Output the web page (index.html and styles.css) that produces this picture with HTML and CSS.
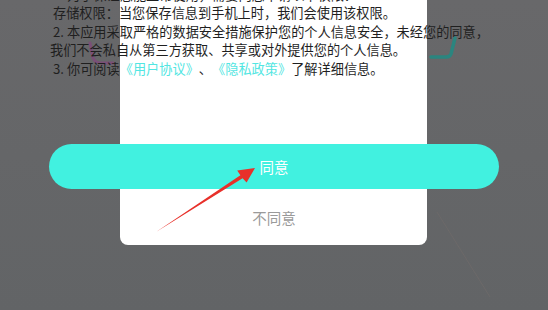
FILE: index.html
```html
<!DOCTYPE html>
<html lang="zh-CN">
<head>
    <meta charset="UTF-8">
    <meta name="viewport" content="width=device-width, initial-scale=1.0">
    <title>隐私协议</title>
    <link rel="stylesheet" href="styles.css">
</head>
<body>
    <div class="stage">
        <!-- faint strokes from the page behind the overlay -->
        <svg class="layer" viewBox="0 0 548 310" width="548" height="310">
            <path d="M90 43 L93 58 Q95 63 101 63 L113 63" fill="none" stroke="#7a4f77" stroke-width="3" stroke-linecap="round"/>
            <path d="M455 38 L451 54 Q450 57 446 57 L431 57" fill="none" stroke="#2b857f" stroke-width="3.5" stroke-linecap="round"/>
            <path d="M437 212 L490 297" fill="none" stroke="#6c6969" stroke-width="1"/>
        </svg>

        <div class="dialog"></div>

        <div class="content">
            <div class="terms">
                <div class="line">1. 为了保证您能正常使用，需要向您申请以下权限：</div>
                <div class="line">存储权限：当您保存信息到手机上时，我们会使用该权限。</div>
                <div class="line">2. 本应用采取严格的数据安全措施保护您的个人信息安全，未经您的同意，</div>
                <div class="line wrap">我们不会私自从第三方获取、共享或对外提供您的个人信息。</div>
                <div class="line">3. 你可阅读<a class="link" href="#">《用户协议》</a>、<a class="link" href="#">《隐私政策》</a>了解详细信息。</div>
            </div>

            <button class="btn-agree">同意</button>
            <div class="btn-refuse">不同意</div>
        </div>

        <!-- red annotation arrow -->
        <svg class="layer" viewBox="0 0 548 310" width="548" height="310">
            <polygon points="156,232 240.4,175.2 237.2,170.6 255,168 246.6,182.6 242.6,178.2" fill="#e8302a"/>
        </svg>
    </div>
</body>
</html>
```

FILE: styles.css
```css
* {
    margin: 0;
    padding: 0;
    box-sizing: border-box;
}

body {
    background-color: #656668;
    font-family: "Noto Sans CJK SC", "Noto Sans", sans-serif;
}

.stage {
    width: 548px;
    height: 310px;
    display: grid;
    overflow: hidden;
    background: linear-gradient(#68686a, #626466);
}

.stage > * {
    grid-area: 1 / 1;
}

.layer {
    pointer-events: none;
}

.dialog {
    align-self: start;
    width: 307px;
    height: 245px;
    margin-left: 120px;
    background-color: #fff;
    border-radius: 0 0 8px 8px;
}

.content {
    display: flex;
    flex-direction: column;
    align-items: center;
}

.terms {
    align-self: flex-start;
    margin-top: -14.5px;
    padding-left: 50px;
    font-size: 13.2px;
    line-height: 18.5px;
    color: #1f1f1f;
    white-space: nowrap;
    text-spacing-trim: space-all;
}

.line {
    padding-left: 3px;
}

.line.wrap {
    padding-left: 0;
}

.link {
    color: #52e6e2;
    text-decoration: none;
}

.btn-agree {
    width: 450px;
    height: 45px;
    margin-top: 65.75px;
    border: none;
    border-radius: 23px;
    background-color: #41f1e0;
    color: #fff;
    font-family: inherit;
    font-size: 14.5px;
    line-height: 45px;
}

.btn-refuse {
    margin-top: 19px;
    font-size: 14.5px;
    line-height: 20px;
    color: #9a9a9a;
}
```
